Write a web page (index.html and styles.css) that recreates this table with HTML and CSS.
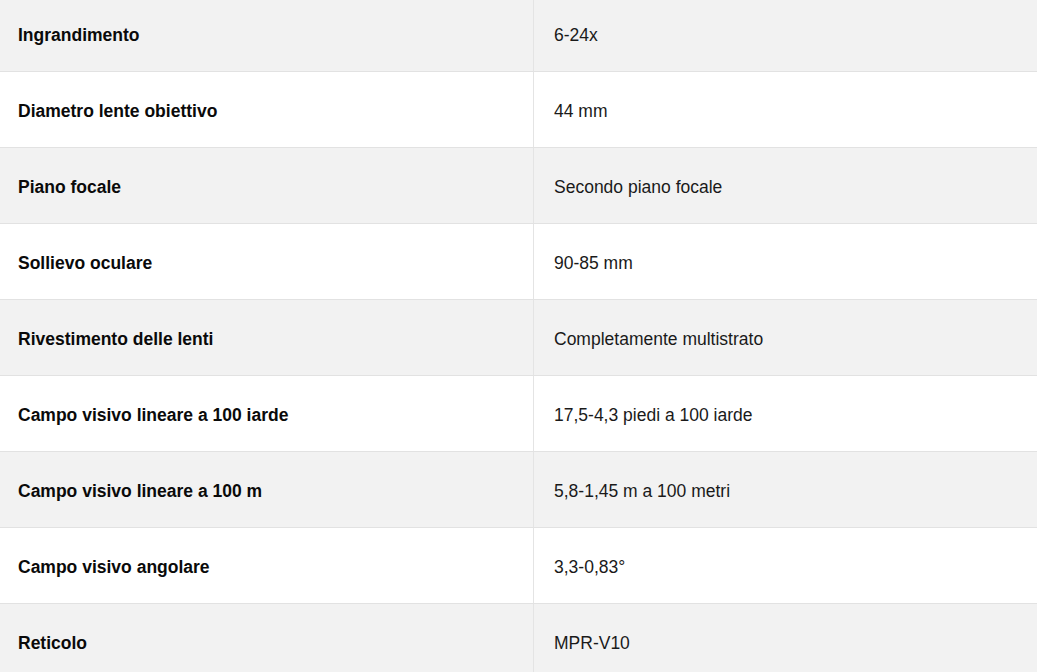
FILE: index.html
```html
<!DOCTYPE html>
<html lang="it">
<head>
<meta charset="utf-8">
<title>Specifiche</title>
<link rel="stylesheet" href="styles.css">
</head>
<body>
<div class="specs">
  <div class="row"><div class="label">Ingrandimento</div><div class="value">6-24x</div></div>
  <div class="row"><div class="label">Diametro lente obiettivo</div><div class="value">44 mm</div></div>
  <div class="row"><div class="label">Piano focale</div><div class="value">Secondo piano focale</div></div>
  <div class="row"><div class="label">Sollievo oculare</div><div class="value">90-85 mm</div></div>
  <div class="row"><div class="label">Rivestimento delle lenti</div><div class="value">Completamente multistrato</div></div>
  <div class="row"><div class="label">Campo visivo lineare a 100 iarde</div><div class="value">17,5-4,3 piedi a 100 iarde</div></div>
  <div class="row"><div class="label">Campo visivo lineare a 100 m</div><div class="value">5,8-1,45 m a 100 metri</div></div>
  <div class="row"><div class="label">Campo visivo angolare</div><div class="value">3,3-0,83°</div></div>
  <div class="row"><div class="label">Reticolo</div><div class="value">MPR-V10</div></div>
</div>
</body>
</html>
```
FILE: styles.css
```css
html, body {
  margin: 0;
  padding: 0;
  background: #ffffff;
  overflow: hidden;
}
body {
  font-family: "Liberation Sans", Arial, sans-serif;
  font-size: 17.5px;
  color: #1a1a1a;
}
.specs {
  margin-top: -4px;
}
.row {
  display: grid;
  grid-template-columns: 534px 1fr;
  height: 75px;
  border-bottom: 1px solid #e2e2e2;
  background: #f2f2f2;
}
.row:nth-child(even) {
  background: #ffffff;
}
.label {
  display: flex;
  align-items: center;
  padding: 3px 0 0 18px;
  font-weight: bold;
  color: #0a0a0a;
  border-right: 1px solid #e4e4e4;
}
.value {
  display: flex;
  align-items: center;
  padding: 3px 0 0 20px;
  color: #1a1a1a;
}
```
